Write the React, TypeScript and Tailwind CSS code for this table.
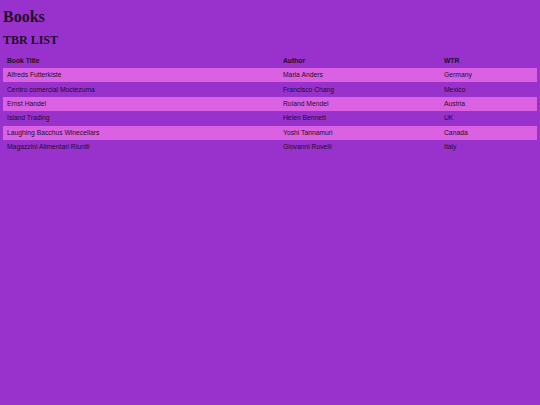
import React from "react";

const rows = [
  ["Alfreds Futterkiste", "Maria Anders", "Germany"],
  ["Centro comercial Moctezuma", "Francisco Chang", "Mexico"],
  ["Ernst Handel", "Roland Mendel", "Austria"],
  ["Island Trading", "Helen Bennett", "UK"],
  ["Laughing Bacchus Winecellars", "Yoshi Tannamuri", "Canada"],
  ["Magazzini Alimentari Riuniti", "Giovanni Rovelli", "Italy"],
];

export default function App() {
  return (
    <div className="w-[540px] h-[405px] bg-[#9932cc] px-[3px] pt-[8px] text-[#1f0c2c] overflow-hidden">
      <h1 className="text-[16px] leading-[18px] font-bold" style={{ fontFamily: '"Liberation Serif", serif' }}>
        Books
      </h1>
      <h2 className="mt-[7px] text-[12px] leading-[14px] font-bold" style={{ fontFamily: '"Liberation Serif", serif' }}>
        TBR LIST
      </h2>
      <table
        className="mt-[7px] w-[534px] border-collapse text-[6.75px]"
        style={{ fontFamily: '"Liberation Sans", Arial, sans-serif' }}
      >
        <thead>
          <tr className="h-[14px]">
            <th className="w-[276px] text-left font-bold pl-[4px]">Book Title</th>
            <th className="w-[161px] text-left font-bold pl-[4px]">Author</th>
            <th className="text-left font-bold pl-[4px]">WTR</th>
          </tr>
        </thead>
        <tbody>
          {rows.map((r, i) => (
            <tr key={i} className={i % 2 === 0 ? "h-[14.4px] bg-[#da62e2]" : "h-[14.4px]"}>
              <td className="pl-[4px]">{r[0]}</td>
              <td className="pl-[4px]">{r[1]}</td>
              <td className="pl-[4px]">{r[2]}</td>
            </tr>
          ))}
        </tbody>
      </table>
    </div>
  );
}
